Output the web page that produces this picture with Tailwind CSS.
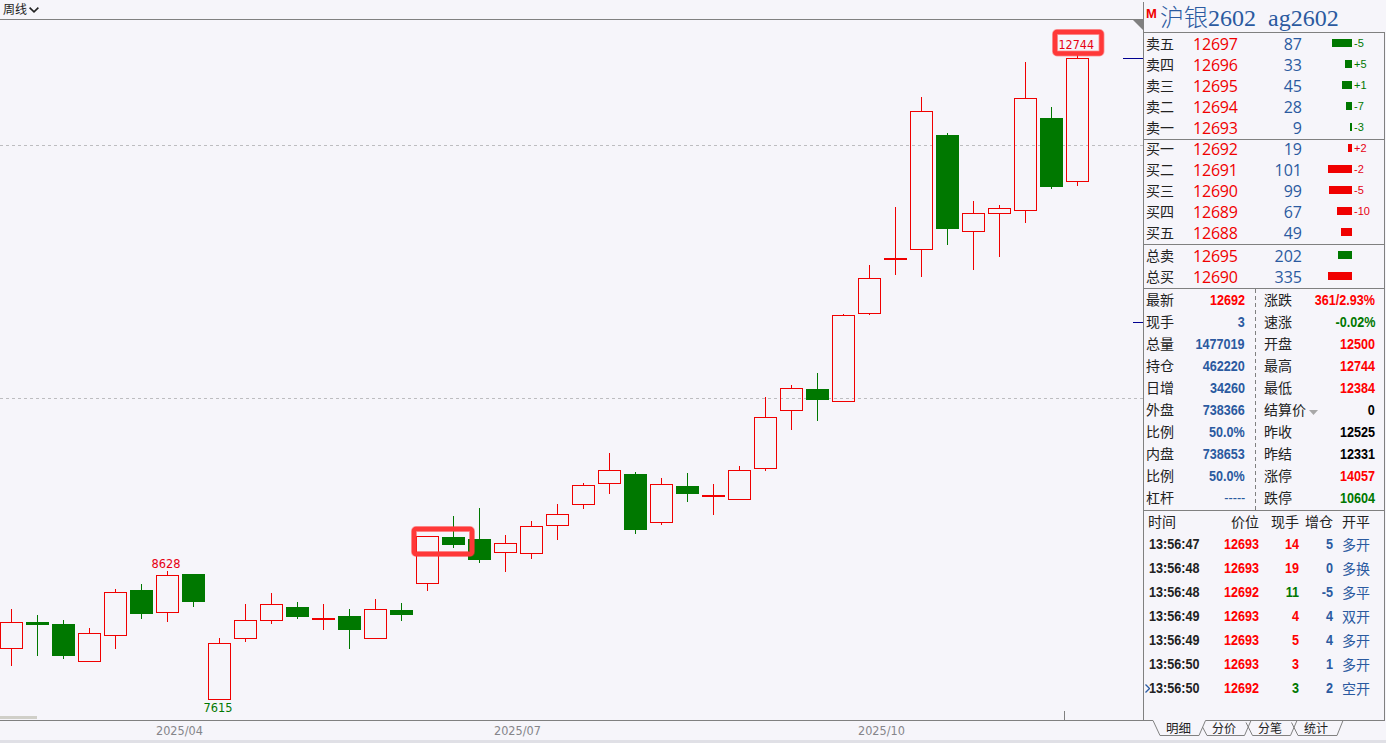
<!DOCTYPE html>
<html lang="zh-CN">
<head>
    <meta charset="UTF-8">
    <meta name="viewport" content="width=device-width, initial-scale=1.0">
    <title>沪银2602 周线</title>
    <script src="https://cdn.jsdelivr.net/npm/@tailwindcss/browser@4"></script>
</head>
<body class="w-[1386px] h-[743px] overflow-hidden flex flex-col bg-[#f6f5fa] text-[#222222] font-['Liberation_Sans','Noto_Sans_CJK_SC',sans-serif]">
    <div class="flex h-[740px]">

        <!-- Chart -->
        <main class="w-[1143px] flex flex-col">
            <div class="h-5 border-b border-[#808080] flex items-center pl-[3px] pt-px text-xs leading-none">
                <span>周线</span>
                <svg class="ml-[2px] w-[10px] h-[6px]" viewBox="0 0 10 6" fill="none" stroke="#222222" stroke-width="1.6">
                    <path d="M0.6 0.6 L5 4.8 L9.4 0.6"/>
                </svg>
            </div>

            <svg class="block w-[1143px] h-[700px] font-['DejaVu_Sans',sans-serif] text-[12px]" viewBox="0 20 1143 700">
                <g stroke="#bdbdc0" stroke-dasharray="3 3">
                    <path d="M0 145.5 H1143"/>
                    <path d="M0 398.5 H1143"/>
                </g>
                <g id="candles" shape-rendering="crispEdges"></g>
                <path d="M1123 58.5 H1143 M1133 322.5 H1143" stroke="#000090"/>
                <path d="M1133 20 H1143 V30 Z" fill="#808080"/>
                <path d="M1064.5 711 V720" stroke="#808080"/>
                <rect x="0" y="716" width="37" height="3" fill="#d0cfc8"/>

                <text x="151.5" y="568" textLength="29" lengthAdjust="spacingAndGlyphs" fill="#e60012">8628</text>
                <text x="203.5" y="712" textLength="29" lengthAdjust="spacingAndGlyphs" fill="#007800">7615</text>
                <text x="1058.5" y="49" textLength="35.5" lengthAdjust="spacingAndGlyphs" fill="#e60012">12744</text>

                <!-- Marked areas -->
                <g fill="none" stroke="#ff3838">
                    <rect x="1055" y="32" width="46.5" height="21.5" rx="2" stroke-width="6" stroke-opacity="0.45"/>
                    <rect x="1055" y="32" width="46.5" height="21.5" rx="2" stroke-width="4.4"/>
                    <rect x="414" y="529" width="58" height="25" rx="2" stroke-width="6" stroke-opacity="0.45"/>
                    <rect x="414" y="529" width="58" height="25" rx="2" stroke-width="4.4"/>
                </g>
            </svg>

            <div class="h-5 border-t border-[#808080] flex pl-[156px] gap-[291px] text-[12px] leading-[20px] text-[#85858a] font-['DejaVu_Sans',sans-serif]">
                <span class="w-[47px] origin-left scale-x-[0.94]">2025/04</span>
                <span class="w-[47px] origin-left scale-x-[0.94]">2025/07</span>
                <span class="w-[47px] ml-[26px] origin-left scale-x-[0.94]">2025/10</span>
            </div>
        </main>

        <!-- Quote panel -->
        <aside class="w-[243px] flex flex-col">
            <div class="h-[32px] pt-[2px]">
                <div class="h-full flex border-l border-[#808080] pl-[2px]">
                    <span class="w-[14px] text-[13px] font-bold text-[#f00000] leading-[23px]">M</span>
                    <h1 class="text-[24px] leading-[32px] font-light text-[#2b5aa0] whitespace-pre [word-spacing:6px] font-['Liberation_Serif','Noto_Sans_CJK_SC',serif]">沪银2602 ag2602</h1>
                </div>
            </div>

            <div class="w-[242px] h-[688px] border-x border-t border-[#808080] flex flex-col text-[14px]">
                <div id="asks" class="h-[106px] pt-px"></div>
                <div class="h-[105px] border-t border-[#808080]"><div id="bids" class="-mt-px"></div></div>
                <div id="totals" class="h-[44px] border-t border-[#808080] pt-px"></div>

                <div class="h-[222px] border-t border-[#808080] flex">
                    <div id="statsLeft" class="w-[111px] pl-[2px] pr-[10px]"></div>
                    <svg class="w-px h-[221px]" viewBox="0 0 1 221"><path d="M0.5 0 V221" stroke="#808080" stroke-dasharray="4 3"/></svg>
                    <div id="statsRight" class="flex-1 pl-[8px] pr-[9px]"></div>
                </div>

                <div class="flex-1 border-t border-[#808080]">
                    <div class="h-[21px] flex leading-[22px] pl-[4px]">
                        <span class="w-[35px]">时间</span>
                        <span class="w-[76px] text-right">价位</span>
                        <span class="w-[40px] text-right">现手</span>
                        <span class="w-[34px] text-right">增仓</span>
                        <span class="pl-[9px]">开平</span>
                    </div>
                    <div id="ticks"></div>
                </div>
            </div>

            <div class="relative h-5">
                <svg class="absolute left-0 top-0 w-[243px] h-5" viewBox="1143 720 243 20" fill="none" stroke="#808080">
                    <path d="M1143 720.5 H1153 L1160 735.5 H1199 L1205.5 720.5 H1385"/>
                    <path d="M1202.5 727 L1207 735.5 H1244.5 L1251 720.5"/>
                    <path d="M1246 722.5 L1252.5 735.5 H1290.5 L1297 720.5"/>
                    <path d="M1291.5 722.5 L1298 735.5 H1337 L1343 720.5"/>
                </svg>
                <div class="relative flex pl-[23px] text-[12px] leading-[19px]">
                    <span class="w-[46px] text-[12.5px]">明细</span>
                    <span class="w-[46px]">分价</span>
                    <span class="w-[46px]">分笔</span>
                    <span>统计</span>
                </div>
            </div>
        </aside>
    </div>
    <div class="h-[3px] bg-[#e0e0e6]"></div>

    <script>
        const RED = "#f00000";
        const GREEN = "#007800";

        // [high, body top, body bottom, low, type] in pixels: r = up, g = down, x = flat
        const candles = [
            [609, 622, 649, 666, "r"], [615, 622, 625, 656, "g"], [620, 624, 656, 659, "g"],
            [628, 633, 662, 662, "r"], [589, 592, 636, 649, "r"], [584, 590, 614, 619, "g"],
            [571, 575, 613, 622, "r"], [574, 574, 602, 607, "g"], [638, 643, 700, 700, "r"],
            [604, 620, 639, 642, "r"], [593, 604, 621, 624, "r"], [602, 607, 617, 619, "g"],
            [604, 618, 620, 630, "x"], [609, 616, 630, 649, "g"], [599, 609, 639, 639, "r"],
            [603, 610, 615, 621, "g"], [536, 536, 584, 591, "r"], [516, 537, 545, 548, "g"],
            [508, 539, 560, 563, "g"], [535, 543, 553, 572, "r"], [521, 526, 554, 559, "r"],
            [504, 514, 526, 540, "r"], [483, 485, 505, 509, "r"], [453, 470, 484, 494, "r"],
            [472, 474, 530, 534, "g"], [478, 484, 523, 525, "r"], [473, 486, 494, 502, "g"],
            [484, 495, 497, 515, "x"], [466, 470, 500, 500, "r"], [397, 417, 469, 471, "r"],
            [385, 388, 411, 430, "r"], [373, 389, 400, 421, "g"], [314, 315, 402, 402, "r"],
            [265, 278, 314, 315, "r"], [207, 258, 260, 275, "x"], [97, 111, 250, 277, "r"],
            [133, 135, 229, 245, "g"], [201, 213, 232, 270, "r"], [205, 208, 214, 257, "r"],
            [62, 98, 211, 223, "r"], [107, 118, 187, 189, "g"], [54, 58, 182, 186, "r"]
        ];

        document.getElementById("candles").innerHTML = candles.map(([high, top, bottom, low, type], i) => {
            const x = i * 26;
            const color = type === "g" ? GREEN : RED;
            const wick = `<path d="M${x + 11.5} ${high} V${top} M${x + 11.5} ${bottom} V${low}" stroke="${color}"/>`;
            if (type === "r") {
                return wick + `<rect x="${x + 0.5}" y="${top + 0.5}" width="22" height="${bottom - top - 1}" fill="none" stroke="${color}"/>`;
            }
            return wick + `<rect x="${x}" y="${top}" width="23" height="${bottom - top}" fill="${color}"/>`;
        }).join("");

        // Order book: label, price, volume, bar width, change
        const asks = [
            ["卖五", 12697, 87, 20, "-5"], ["卖四", 12696, 33, 7, "+5"], ["卖三", 12695, 45, 10, "+1"],
            ["卖二", 12694, 28, 6, "-7"], ["卖一", 12693, 9, 2, "-3"]
        ];
        const bids = [
            ["买一", 12692, 19, 4, "+2"], ["买二", 12691, 101, 24, "-2"], ["买三", 12690, 99, 23, "-5"],
            ["买四", 12689, 67, 15, "-10"], ["买五", 12688, 49, 11, ""]
        ];

        function bookRow([label, price, volume, width, change], side) {
            const bar = side === "ask" ? "bg-[#007800]" : "bg-[#f00000]";
            const text = side === "ask" ? "text-[#007800]" : "text-[#e60012]";
            return `
                <div class="h-[21px] flex items-center pl-[2px] leading-[21px]">
                    <span class="w-[47px]">${label}</span>
                    <span class="w-[46px] text-[16px] tracking-[-0.2px] text-[#f00000] font-['Open_Sans']">${price}</span>
                    <span class="w-[63px] text-[16px] text-right text-[#2b5aa0] font-['Open_Sans']">${volume}</span>
                    <span class="w-[50px] flex justify-end pb-[3px]"><i class="h-2 ${bar}" style="width: ${width}px"></i></span>
                    <span class="pl-[2px] pb-[2px] text-[11px] ${text}">${change}</span>
                </div>`;
        }

        document.getElementById("asks").innerHTML = asks.map(r => bookRow(r, "ask")).join("");
        document.getElementById("bids").innerHTML = bids.map(r => bookRow(r, "bid")).join("");
        document.getElementById("totals").innerHTML =
            bookRow(["总卖", 12695, 202, 14, ""], "ask") + bookRow(["总买", 12690, 335, 24, ""], "bid");

        const colors = {
            red: "text-[#ff0000]",
            green: "text-[#007800]",
            blue: "text-[#2b5aa0]",
            black: "text-black"
        };

        const statsLeft = [
            ["最新", "12692", "red"], ["现手", "3", "blue"], ["总量", "1477019", "blue"], ["持仓", "462220", "blue"],
            ["日增", "34260", "blue"], ["外盘", "738366", "blue"], ["比例", "50.0%", "blue"], ["内盘", "738653", "blue"],
            ["比例", "50.0%", "blue"], ["杠杆", "-----", "blue"]
        ];
        const statsRight = [
            ["涨跌", "361/2.93%", "red"], ["速涨", "-0.02%", "green"], ["开盘", "12500", "red"], ["最高", "12744", "red"],
            ["最低", "12384", "red"], ["结算价", "0", "black"], ["昨收", "12525", "black"], ["昨结", "12331", "black"],
            ["涨停", "14057", "red"], ["跌停", "10604", "green"]
        ];

        function statRow([label, value, color]) {
            const arrow = label === "结算价"
                ? `<svg class="w-[9px] h-[5px] ml-[3px] mt-[4px]" viewBox="0 0 9 5"><path d="M0 0 H9 L4.5 5 Z" fill="#a8a8a8"/></svg>`
                : "";
            const weight = value === "-----" ? "font-normal" : "font-bold";
            return `
                <div class="h-[22px] flex items-center leading-[22px]">
                    <span>${label}</span>${arrow}
                    <span class="ml-auto ${weight} origin-right scale-x-90 ${colors[color]}">${value}</span>
                </div>`;
        }

        document.getElementById("statsLeft").innerHTML = statsLeft.map(statRow).join("");
        document.getElementById("statsRight").innerHTML = statsRight.map(statRow).join("");

        const ticks = [
            ["13:56:47", 12693, 14, "red", 5, "多开"], ["13:56:48", 12693, 19, "red", 0, "多换"],
            ["13:56:48", 12692, 11, "green", -5, "多平"], ["13:56:49", 12693, 4, "red", 4, "双开"],
            ["13:56:49", 12693, 5, "red", 4, "多开"], ["13:56:50", 12693, 3, "red", 1, "多开"],
            ["13:56:50", 12692, 3, "green", 2, "空开"]
        ];

        document.getElementById("ticks").innerHTML = ticks.map(([time, price, volume, color, change, kind], i) => `
            <div class="relative h-6 flex items-center leading-6 pl-[5px] font-bold">
                ${i === ticks.length - 1 ? `<svg class="absolute left-[1px] top-[8px] w-[5px] h-[9px]" viewBox="0 0 5 9" fill="none" stroke="#2b5aa0" stroke-width="1.3"><path d="M0.5 0.5 L4.5 4.5 L0.5 8.5"/></svg>` : ""}
                <span class="w-[50px] origin-left scale-x-90">${time}</span>
                <span class="w-[60px] text-right origin-right scale-x-90 text-[#ff0000]">${price}</span>
                <span class="w-[40px] text-right origin-right scale-x-90 ${colors[color]}">${volume}</span>
                <span class="w-[34px] text-right origin-right scale-x-90 text-[#2b5aa0]">${change}</span>
                <span class="pl-[9px] pt-px font-normal text-[#2b5aa0]">${kind}</span>
            </div>`).join("");
    </script>
</body>
</html>
